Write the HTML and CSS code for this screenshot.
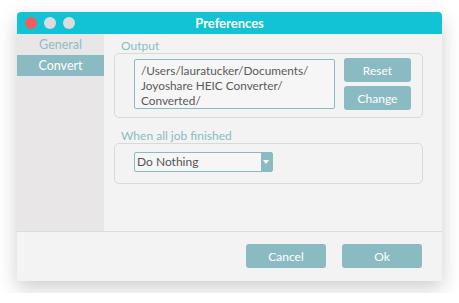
FILE: index.html
```html
<!DOCTYPE html>
<html lang="en">
<head>
  <meta charset="UTF-8" />
  <title>Preferences</title>
  <link rel="stylesheet" href="styles.css">
</head>
<body>

<div class="window">
  <div class="titlebar">
    <div class="lights">
      <span class="light red"></span>
      <span class="light"></span>
      <span class="light"></span>
    </div>
    <div class="title">Preferences</div>
  </div>

  <div class="main">
    <!-- Sidebar -->
    <div class="sidebar">
      <div class="nav-item">General</div>
      <div class="nav-item active">Convert</div>
    </div>

    <!-- Settings -->
    <div class="content">
      <div class="group-label">Output</div>
      <div class="group output-group">
        <div class="path-box">/Users/lauratucker/Documents/<br>Joyoshare HEIC Converter/<br>Converted/</div>
        <div class="side-buttons">
          <button class="btn small">Reset</button>
          <button class="btn small">Change</button>
        </div>
      </div>

      <div class="group-label spaced">When all job finished</div>
      <div class="group finish-group">
        <div class="select">
          <span class="select-value">Do Nothing</span>
          <span class="select-arrow"></span>
        </div>
      </div>
    </div>
  </div>

  <div class="footer">
    <button class="btn big">Cancel</button>
    <button class="btn big">Ok</button>
  </div>
</div>

</body>
</html>
```

FILE: styles.css
```css
body {
  font-family: 'Lato', 'Open Sans', sans-serif;
  background: #ffffff;
  margin: 0;
  padding: 12px 17px;
}

.window {
  width: 425px;
  height: 269px;
  display: flex;
  flex-direction: column;
  background: #f3f3f3;
  border-radius: 4px 4px 0 0;
  box-shadow: 0 7px 20px rgba(0,0,0,0.2);
  overflow: hidden;
}

.titlebar {
  height: 22px;
  background: #12c2d5;
  display: flex;
  align-items: center;
  position: relative;
}

.lights {
  display: flex;
  gap: 7px;
  padding-left: 8px;
}

.light {
  width: 12px;
  height: 12px;
  border-radius: 50%;
  background: #dcdcdc;
}

.light.red {
  background: #f05d5a;
}

.title {
  position: absolute;
  left: 0;
  right: 0;
  text-align: center;
  color: white;
  font-size: 13px;
  font-weight: bold;
  pointer-events: none;
}

.main {
  flex: 1;
  display: flex;
}

.sidebar {
  width: 87px;
  background: #e8e6e7;
}

.nav-item {
  height: 21px;
  line-height: 22px;
  text-align: center;
  font-size: 12.5px;
  color: #8fbdc3;
}

.nav-item.active {
  background: #8bbbc2;
  color: white;
}

.content {
  flex: 1;
  padding: 4px 19px 0 10px;
}

.group-label {
  height: 15px;
  line-height: 15px;
  margin-left: 7px;
  font-size: 12px;
  color: #8bbbc2;
}

.group-label.spaced {
  margin-top: 10px;
}

.group {
  border: 1px solid #d9d9d9;
  border-radius: 5px;
  box-sizing: border-box;
}

.output-group {
  height: 65px;
  display: flex;
  gap: 9px;
  padding: 5px 0 0 19px;
}

.path-box {
  width: 201px;
  height: 50px;
  box-sizing: border-box;
  border: 1px solid #8bbbc2;
  border-radius: 2px;
  background: #f6f6f6;
  padding: 3px 0 0 6px;
  font-size: 11.8px;
  line-height: 15px;
  color: #5a5a5a;
}

.side-buttons {
  display: flex;
  flex-direction: column;
  gap: 4px;
  margin-top: -1px;
}

.btn {
  background: #8bbbc2;
  color: white;
  border: none;
  border-radius: 3px;
  font-family: inherit;
  padding: 0;
  cursor: pointer;
}

.btn.small {
  width: 67px;
  height: 24px;
  font-size: 12px;
}

.btn.big {
  width: 80px;
  height: 24px;
  font-size: 12px;
}

.finish-group {
  height: 41px;
  padding: 8px 0 0 19px;
}

.select {
  width: 139px;
  height: 20px;
  box-sizing: border-box;
  border: 1px solid #8bbbc2;
  border-radius: 2px;
  background: #f6f6f6;
  display: flex;
}

.select-value {
  flex: 1;
  padding-left: 2px;
  line-height: 18px;
  font-size: 12px;
  color: #555;
}

.select-arrow {
  width: 11px;
  background: #8bbbc2;
  position: relative;
}

.select-arrow::after {
  content: "";
  position: absolute;
  left: 2px;
  top: 7px;
  border-left: 3.5px solid transparent;
  border-right: 3.5px solid transparent;
  border-top: 4px solid white;
}

.footer {
  height: 50px;
  box-sizing: border-box;
  border-top: 1px solid #dcdcdc;
  display: flex;
  justify-content: flex-end;
  gap: 16px;
  padding: 12px 20px 0 0;
}
```
